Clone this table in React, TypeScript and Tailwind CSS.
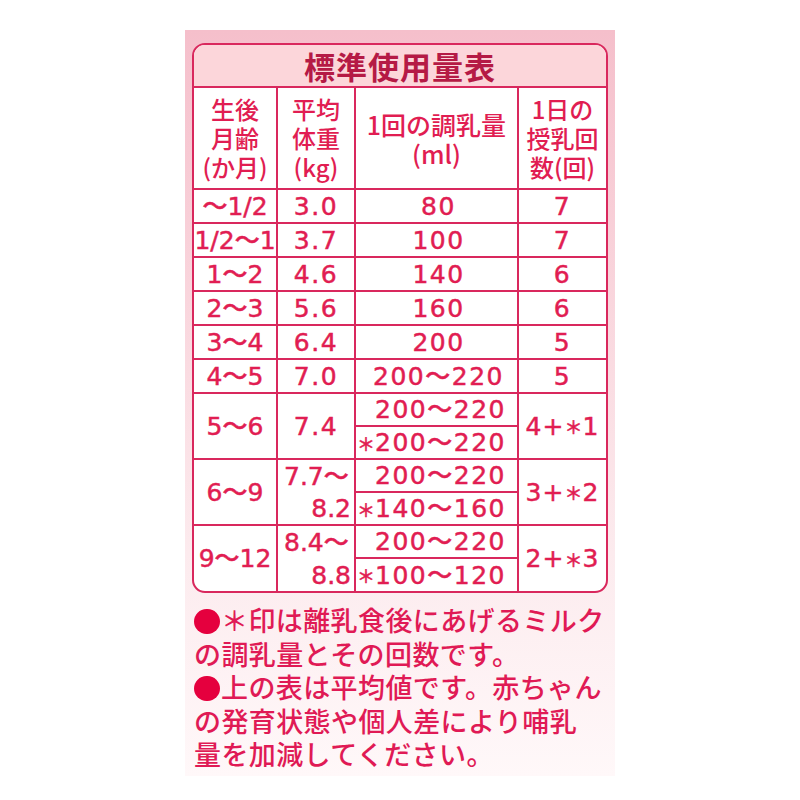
import React from 'react';

const LINE = 'border-[#d9285d]';
const NUM =
  "font-['DejaVu_Sans','Noto_Sans_CJK_JP',sans-serif] text-[25px] leading-none tracking-[1.5px] [-webkit-text-stroke:0.5px_currentColor]";

const Ast = () => (
  <span className="font-['Noto_Sans_CJK_JP',sans-serif] text-[18px] tracking-normal align-[1px]">＊</span>
);

const Dot = () => (
  <span className="inline-block w-[26px] h-[25px] rounded-full bg-[#e5003e] mr-[1px] align-[-3px]" />
);

type Row = { age: string; wt: string; ml: string; times: string };

const rows: Row[] = [
  { age: '～1/2', wt: '3.0', ml: '80', times: '7' },
  { age: '1/2～1', wt: '3.7', ml: '100', times: '7' },
  { age: '1～2', wt: '4.6', ml: '140', times: '6' },
  { age: '2～3', wt: '5.6', ml: '160', times: '6' },
  { age: '3～4', wt: '6.4', ml: '200', times: '5' },
  { age: '4～5', wt: '7.0', ml: '200～220', times: '5' },
];

type Double = { age: string; wt: [string, string] | string; ml2: string; times: [string, string]; last?: boolean };

const doubles: Double[] = [
  { age: '5～6', wt: '7.4', ml2: '200～220', times: ['4+', '1'] },
  { age: '6～9', wt: ['7.7～', '8.2'], ml2: '140～160', times: ['3+', '2'] },
  { age: '9～12', wt: ['8.4～', '8.8'], ml2: '100～120', times: ['2+', '3'], last: true },
];

const Head: React.FC<{ lines: string[]; className?: string }> = ({ lines, className }) => (
  <div className={`flex flex-col items-center justify-center whitespace-nowrap ${className ?? ''}`}>
    {lines.map((l) => (
      <div key={l} className="h-[29px] flex items-center">
        {l}
      </div>
    ))}
  </div>
);

export default function App() {
  return (
    <div className="w-[800px] h-[800px] bg-white pt-[30px] pl-[185px] font-['Noto_Sans_CJK_JP',sans-serif] font-medium text-[#e11d52]">
      <div className="w-[430px] h-[746px] bg-linear-to-b from-[#f5bfcb] via-[#fcebee] via-70% to-[#fff8f9] px-[7px] pt-[13px]">
        <div className={`rounded-[13px] border-2 ${LINE} overflow-hidden bg-white`}>
          {/* title */}
          <div className={`h-[43px] border-b-2 ${LINE} bg-[#fcd6da] flex items-center justify-center text-[31px] tracking-[1px] text-[#b51a45] font-semibold leading-none`}>
            標準使用量表
          </div>

          {/* column heads */}
          <div className={`flex h-[102px] border-b-2 ${LINE} text-[24px] leading-[24px]`}>
            <Head lines={['生後', '月齢', '(か月)']} className={`w-[84px] border-r-2 ${LINE}`} />
            <Head lines={['平均', '体重', '(kg)']} className={`w-[78px] border-r-2 ${LINE}`} />
            <Head lines={['1回の調乳量', '(ml)']} className={`w-[163px] border-r-2 ${LINE} text-[25px]`} />
            <Head lines={['1日の', '授乳回', '数(回)']} className="flex-1" />
          </div>

          {/* single rows */}
          {rows.map((r) => (
            <div key={r.age} className={`flex h-[34px] border-b-2 ${LINE} ${NUM}`}>
              <div className={`w-[84px] border-r-2 ${LINE} flex items-center justify-center whitespace-nowrap tracking-[0px]`}>{r.age}</div>
              <div className={`w-[78px] border-r-2 ${LINE} flex items-center justify-center`}>{r.wt}</div>
              <div className={`w-[163px] border-r-2 ${LINE} flex items-center justify-center pl-[4px]`}>{r.ml}</div>
              <div className="flex-1 flex items-center justify-center">{r.times}</div>
            </div>
          ))}

          {/* double rows */}
          {doubles.map((d) => (
            <div key={d.age} className={`flex ${d.last ? 'h-[65px]' : `h-[66px] border-b-2 ${LINE}`} ${NUM}`}>
              <div className={`w-[84px] border-r-2 ${LINE} flex items-center justify-center whitespace-nowrap tracking-[0px]`}>{d.age}</div>
              {typeof d.wt === 'string' ? (
                <div className={`w-[78px] border-r-2 ${LINE} flex items-center justify-center`}>{d.wt}</div>
              ) : (
                <div className={`w-[78px] border-r-2 ${LINE} flex flex-col whitespace-nowrap tracking-[0px]`}>
                  <div className="h-[33px] flex items-center pl-[6px]">{d.wt[0]}</div>
                  <div className="flex-1 flex items-center justify-end pr-[3px]">{d.wt[1]}</div>
                </div>
              )}
              <div className={`w-[163px] border-r-2 ${LINE} flex flex-col`}>
                <div className={`h-[33px] border-b-2 ${LINE} flex items-center justify-end pr-[11px]`}>200～220</div>
                <div className="flex-1 flex items-center justify-end pr-[11px] whitespace-nowrap">
                  <Ast />
                  {d.ml2}
                </div>
              </div>
              <div className="flex-1 flex items-center justify-center whitespace-nowrap tracking-[1px]">
                {d.times[0]}
                <Ast />
                {d.times[1]}
              </div>
            </div>
          ))}
        </div>

        {/* notes */}
        <div className="mt-[10px] pl-[2px] text-[27px] leading-[33.5px] tracking-[0.4px] text-[#e01a55] whitespace-nowrap">
          <div>
            <Dot />＊印は離乳食後にあげるミルク
          </div>
          <div>の調乳量とその回数です。</div>
          <div>
            <Dot />上の表は平均値です。赤ちゃん
          </div>
          <div>の発育状態や個人差により哺乳</div>
          <div>量を加減してください。</div>
        </div>
      </div>
    </div>
  );
}
